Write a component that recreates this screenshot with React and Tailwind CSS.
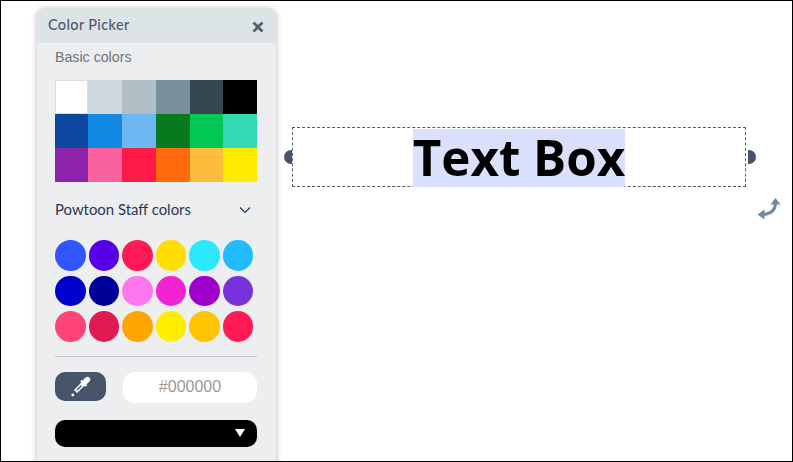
const basic = ["#ffffff","#d0d8df","#b0bec5","#78909c","#37474f","#000000","#0d47a1","#1289e5","#6db8f2","#087a1e","#00c853","#34d9b4","#8e24aa","#f9629f","#ff1a47","#ff6a0d","#fdbd3b","#ffea00"];
const staff = ["#3355ff","#5500e6","#ff1a55","#ffdd00","#2ce8ff","#22bbff","#0000cc","#000099","#ff77ee","#f024d0","#a000cc","#7733d9","#ff4477","#e01a55","#ffa500","#ffee00","#ffc400","#ff1a55"];

export default function App() {
  return (
    <div className="h-[462px] w-[793px] overflow-hidden border border-black bg-white flex items-start" style={{fontFamily:"'Lato','Liberation Sans',sans-serif"}}>
      <div className="ml-[36px] mt-[8px] w-[239px] h-[470px] shrink-0 rounded-t-[8px] bg-[#edeef0] shadow-[0_0_6px_rgba(0,0,0,0.28)]">
        <div className="h-[34px] rounded-t-[8px] bg-[#dde4e7] flex items-center justify-between pl-[11px] pr-[12px] pb-[2px]">
          <span className="text-[14.5px] tracking-[0.35px] font-medium text-[#4f5a6b]">Color Picker</span>
          <svg className="mt-[3px]" width="12" height="12" viewBox="0 0 12 12"><path d="M1.5 1.5 10.5 10.5M10.5 1.5 1.5 10.5" stroke="#56616f" strokeWidth="2.8"/></svg>
        </div>
        <div className="pl-[18px] pr-[18px]">
          <div className="mt-[5px] text-[14.2px] leading-[18px] text-[#6f737a]" style={{fontFamily:"'Liberation Sans',sans-serif"}}>Basic colors</div>
          <div className="mt-[14px] grid grid-cols-[33px_34px_34px_34px_33px_34px] grid-rows-[34px_34px_34px] w-[202px]">
            {basic.map((c,i)=><div key={i} className={i===0?"border border-[#dddddd]":""} style={{backgroundColor:c}}/>)}
          </div>
          <div className="mt-[17px] flex items-center justify-between pr-[6px] w-[202px]">
            <span className="text-[14.9px] leading-[20px] text-[#2b3556]">Powtoon Staff colors</span>
            <svg className="mt-[1px]" width="12" height="8" viewBox="0 0 12 8" fill="none"><path d="M1 1.5 6 6.5 11 1.5" stroke="#2b3556" strokeWidth="1.2"/></svg>
          </div>
          <div className="mt-[21px] grid grid-cols-[repeat(6,30px)] gap-x-[3.6px] gap-y-[5px]">
            {staff.map((c,i)=><div key={i} className="h-[30.5px] w-[30.5px] rounded-full" style={{backgroundColor:c}}/>)}
          </div>
          <div className="mt-[14px] h-px w-[202px] bg-[#c5c7cf]"/>
          <div className="mt-[15px] flex items-start justify-between w-[202px]">
            <div className="h-[29px] w-[51px] rounded-[10px] bg-[#46546a] flex items-center justify-center">
              <svg width="22" height="22" viewBox="0 0 22 22" fill="none">
                <path d="M14 8 5.5 16.5" stroke="#fff" strokeWidth="4.4"/>
                <path d="M11.6 10.4 7 15" stroke="#46546a" strokeWidth="1.4"/>
                <path d="M13.5 8.5 17.5 4.5" stroke="#fff" strokeWidth="5.4" strokeLinecap="round"/>
                <path d="M11 5.5 16.5 11" stroke="#fff" strokeWidth="2.2"/>
                <circle cx="2.8" cy="20" r="1.4" fill="#fff"/>
              </svg>
            </div>
            <div className="h-[31px] w-[134px] rounded-[12px] bg-white flex items-center justify-center text-[16px] text-[#999999]" style={{fontFamily:"'Liberation Sans',sans-serif"}}>#000000</div>
          </div>
          <div className="mt-[17px] h-[27px] w-[202px] rounded-[10px] bg-black flex items-center justify-end pr-[12px]">
            <div className="h-0 w-0 border-x-[5px] border-t-[8px] border-x-transparent border-t-white"/>
          </div>
        </div>
      </div>
      <div className="ml-[16px] mt-[126px] flex flex-col items-end">
        <div className="relative flex h-[60px] w-[454px] justify-center border border-dashed border-[#555e6e]">
          <span className="mt-[1px] h-[58px] bg-[#dbe0ff] text-[49.3px] leading-[55px] font-bold text-black whitespace-nowrap" style={{fontFamily:"'Open Sans',sans-serif"}}>Text Box</span>
          <div className="absolute left-[-9px] top-[22px] h-[14px] w-[8px] rounded-l-full bg-[#46546a]"/>
          <div className="absolute right-[-11px] top-[22px] h-[14px] w-[8px] rounded-r-full bg-[#46546a]"/>
        </div>
        <svg className="mt-[10px] mr-[-35px]" width="24" height="24" viewBox="0 0 24 24" fill="none">
          <path d="M18.5 6c0 6.5-4 10.5-12 11.5" stroke="#76899a" strokeWidth="3"/>
          <path d="M18.5 1 23.5 7.5h-10z" fill="#76899a"/>
          <path d="M0.5 17.5 7.5 12.5v10z" fill="#76899a"/>
        </svg>
      </div>
    </div>
  );
}
